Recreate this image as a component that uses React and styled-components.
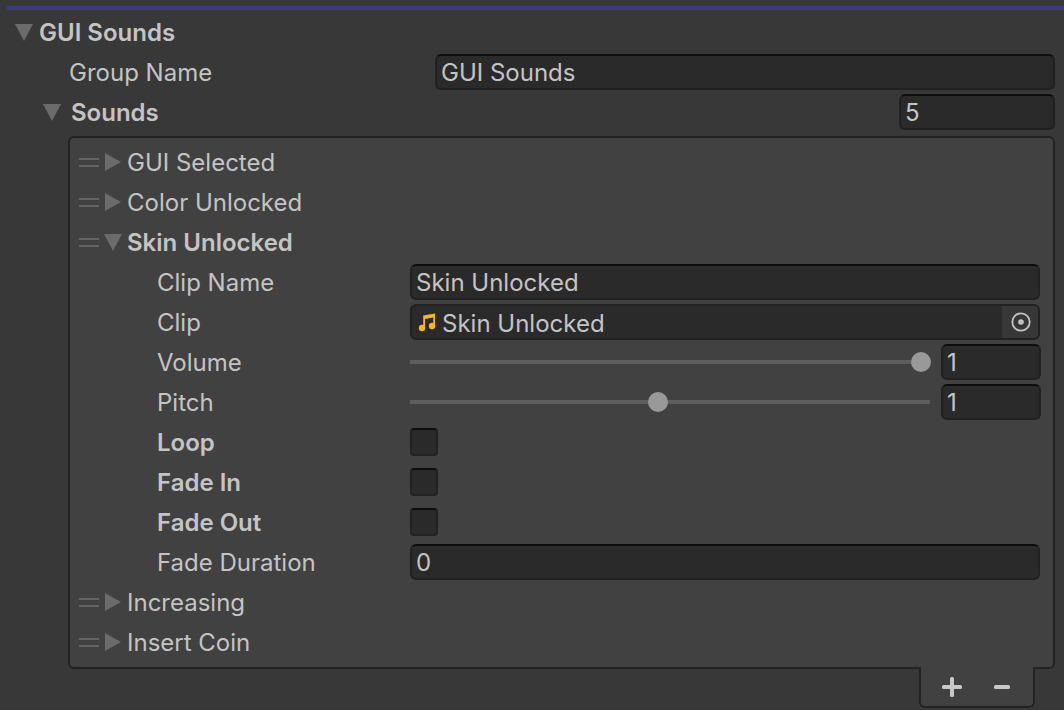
import React from 'react';
import styled, { createGlobalStyle } from 'styled-components';

const Global = createGlobalStyle`
  html, body { margin: 0; padding: 0; background: #383838; overflow: hidden; }
  * { box-sizing: border-box; }
`;

const Page = styled.div`
  width: 1064px;
  height: 710px;
  padding: 6px 0 0 7px;
  font-family: Inter, "Liberation Sans", sans-serif;
  font-size: 24px;
  color: #c4c4c4;
  overflow: hidden;
`;

const TopLine = styled.div`
  height: 4px;
  margin-bottom: 2px;
  background: #3d3a7e;
`;

const Row = styled.div`
  display: flex;
  align-items: center;
  height: 40px;
  padding-left: ${p => p.$indent || 0}px;
  padding-right: ${p => p.$right || 0}px;
`;

const Label = styled.div`
  width: ${p => p.$width ? p.$width + 'px' : 'auto'};
  flex: none;
  font-weight: ${p => p.$bold ? 600 : 400};
  white-space: nowrap;
`;

const Arrow = styled.svg`
  flex: none;
  display: block;
  width: 18px;
  height: 18px;
  margin-right: ${p => p.$gap}px;
  fill: #6b6b6b;
`;

const Fold = ({ open, gap }) => (
  <Arrow viewBox="0 0 18 18" $gap={gap}>
    {open ? <path d="M0 1H18L9 18Z" /> : <path d="M1 0L17 9L1 18Z" />}
  </Arrow>
);

const Handle = styled.div`
  flex: none;
  width: 20px;
  height: 9px;
  margin-right: 5px;
  border-top: 2px solid #646464;
  border-bottom: 2px solid #646464;
`;

const Spacer = styled.div`
  flex: 1;
`;

const Field = styled.div`
  display: flex;
  align-items: center;
  flex: ${p => p.$width ? 'none' : 1};
  width: ${p => p.$width ? p.$width + 'px' : 'auto'};
  height: 36px;
  padding-left: 4px;
  background: #2a2a2a;
  border: 2px solid #212121;
  border-top-color: #0d0d0d;
  border-radius: 6px;
  overflow: hidden;
`;

const NumberField = styled(Field)`
  margin-right: -1px;
`;

const ObjectField = styled(Field)`
  padding-left: 5px;
  border-top-color: #212121;
  gap: 5px;
`;

const ObjectName = styled.span`
  flex: 1;
  padding-top: 2px;
`;

const PickerButton = styled.div`
  display: flex;
  align-items: center;
  justify-content: center;
  flex: none;
  width: 36px;
  height: 100%;
  padding-left: 2px;
  background: #373737;
`;

const Box = styled.div`
  margin: 4px 9px 0 61px;
  padding: 4px 0 5px 9px;
  height: 533px;
  background: #414141;
  border: 2px solid #232323;
  border-radius: 6px;
`;

const TrackWrap = styled.div`
  position: relative;
  flex: none;
  width: 520px;
  height: 4px;
  margin-right: 11px;
  background: #5e5e5e;
`;

const Thumb = styled.div`
  position: absolute;
  top: -8px;
  width: 20px;
  height: 20px;
  margin-left: -10px;
  border-radius: 50%;
  background: #999999;
`;

const Toggle = styled.div`
  width: 28px;
  height: 28px;
  background: #2a2a2a;
  border: 2px solid #212121;
  border-top-color: #0d0d0d;
  border-radius: 4px;
`;

const FooterRow = styled.div`
  display: flex;
  justify-content: flex-end;
  padding-right: 29px;
`;

const Footer = styled.div`
  display: flex;
  align-items: center;
  justify-content: space-between;
  width: 116px;
  height: 41px;
  margin-top: -2px;
  padding: 0 23px 0 21px;
  background: #414141;
  border: 2px solid #232323;
  border-top: none;
  border-radius: 0 0 6px 6px;
`;

const FooterIcon = styled.svg`
  display: block;
  fill: #c8c8c8;
`;

const Slider = ({ left }) => (
  <TrackWrap>
    <Thumb style={{ left: `${left}%` }} />
  </TrackWrap>
);

const Item = ({ name, open }) => (
  <Row>
    <Handle />
    <Fold open={open} gap={5} />
    <Label $bold={open}>{name}</Label>
  </Row>
);

const Prop = ({ name, bold, children }) => (
  <Row $indent={78} $right={13}>
    <Label $width={253} $bold={bold}>{name}</Label>
    {children}
  </Row>
);

export default function App() {
  return (
    <Page>
      <Global />
      <TopLine />
      <Row $indent={8}>
        <Fold open gap={6} />
        <Label $bold>GUI Sounds</Label>
      </Row>
      <Row $indent={62} $right={9}>
        <Label $width={366}>Group Name</Label>
        <Field>GUI Sounds</Field>
      </Row>
      <Row $indent={36} $right={9}>
        <Fold open gap={10} />
        <Label $bold>Sounds</Label>
        <Spacer />
        <Field $width={156}>5</Field>
      </Row>
      <Box>
        <Item name="GUI Selected" />
        <Item name="Color Unlocked" />
        <Item name="Skin Unlocked" open />
        <Prop name="Clip Name"><Field>Skin Unlocked</Field></Prop>
        <Prop name="Clip">
          <ObjectField>
            <svg width="20" height="20" viewBox="0 0 20 20" fill="#f5b90f">
              <circle cx="5" cy="16" r="3.2" />
              <circle cx="15" cy="14" r="3.2" />
              <path d="M6.2 16V3.5L18 1.5V14H16.2V5.6L8 7V16Z" />
            </svg>
            <ObjectName>Skin Unlocked</ObjectName>
            <PickerButton>
              <svg width="20" height="20" viewBox="0 0 20 20" fill="none">
                <circle cx="10" cy="10" r="8.7" stroke="#c4c4c4" strokeWidth="1.8" />
                <circle cx="10" cy="10" r="2.8" fill="#c4c4c4" />
              </svg>
            </PickerButton>
          </ObjectField>
        </Prop>
        <Prop name="Volume">
          <Slider left={98.2} />
          <NumberField>1</NumberField>
        </Prop>
        <Prop name="Pitch">
          <Slider left={47.7} />
          <NumberField>1</NumberField>
        </Prop>
        <Prop name="Loop" bold><Toggle /></Prop>
        <Prop name="Fade In" bold><Toggle /></Prop>
        <Prop name="Fade Out" bold><Toggle /></Prop>
        <Prop name="Fade Duration"><Field>0</Field></Prop>
        <Item name="Increasing" />
        <Item name="Insert Coin" />
      </Box>
      <FooterRow>
        <Footer>
          <FooterIcon width="20" height="20" viewBox="0 0 20 20">
            <rect x="8" y="0" width="4" height="20" rx="1.5" />
            <rect x="0" y="8" width="20" height="4" rx="1.5" />
          </FooterIcon>
          <FooterIcon width="16" height="4" viewBox="0 0 16 4">
            <rect width="16" height="4" rx="1.5" />
          </FooterIcon>
        </Footer>
      </FooterRow>
    </Page>
  );
}
